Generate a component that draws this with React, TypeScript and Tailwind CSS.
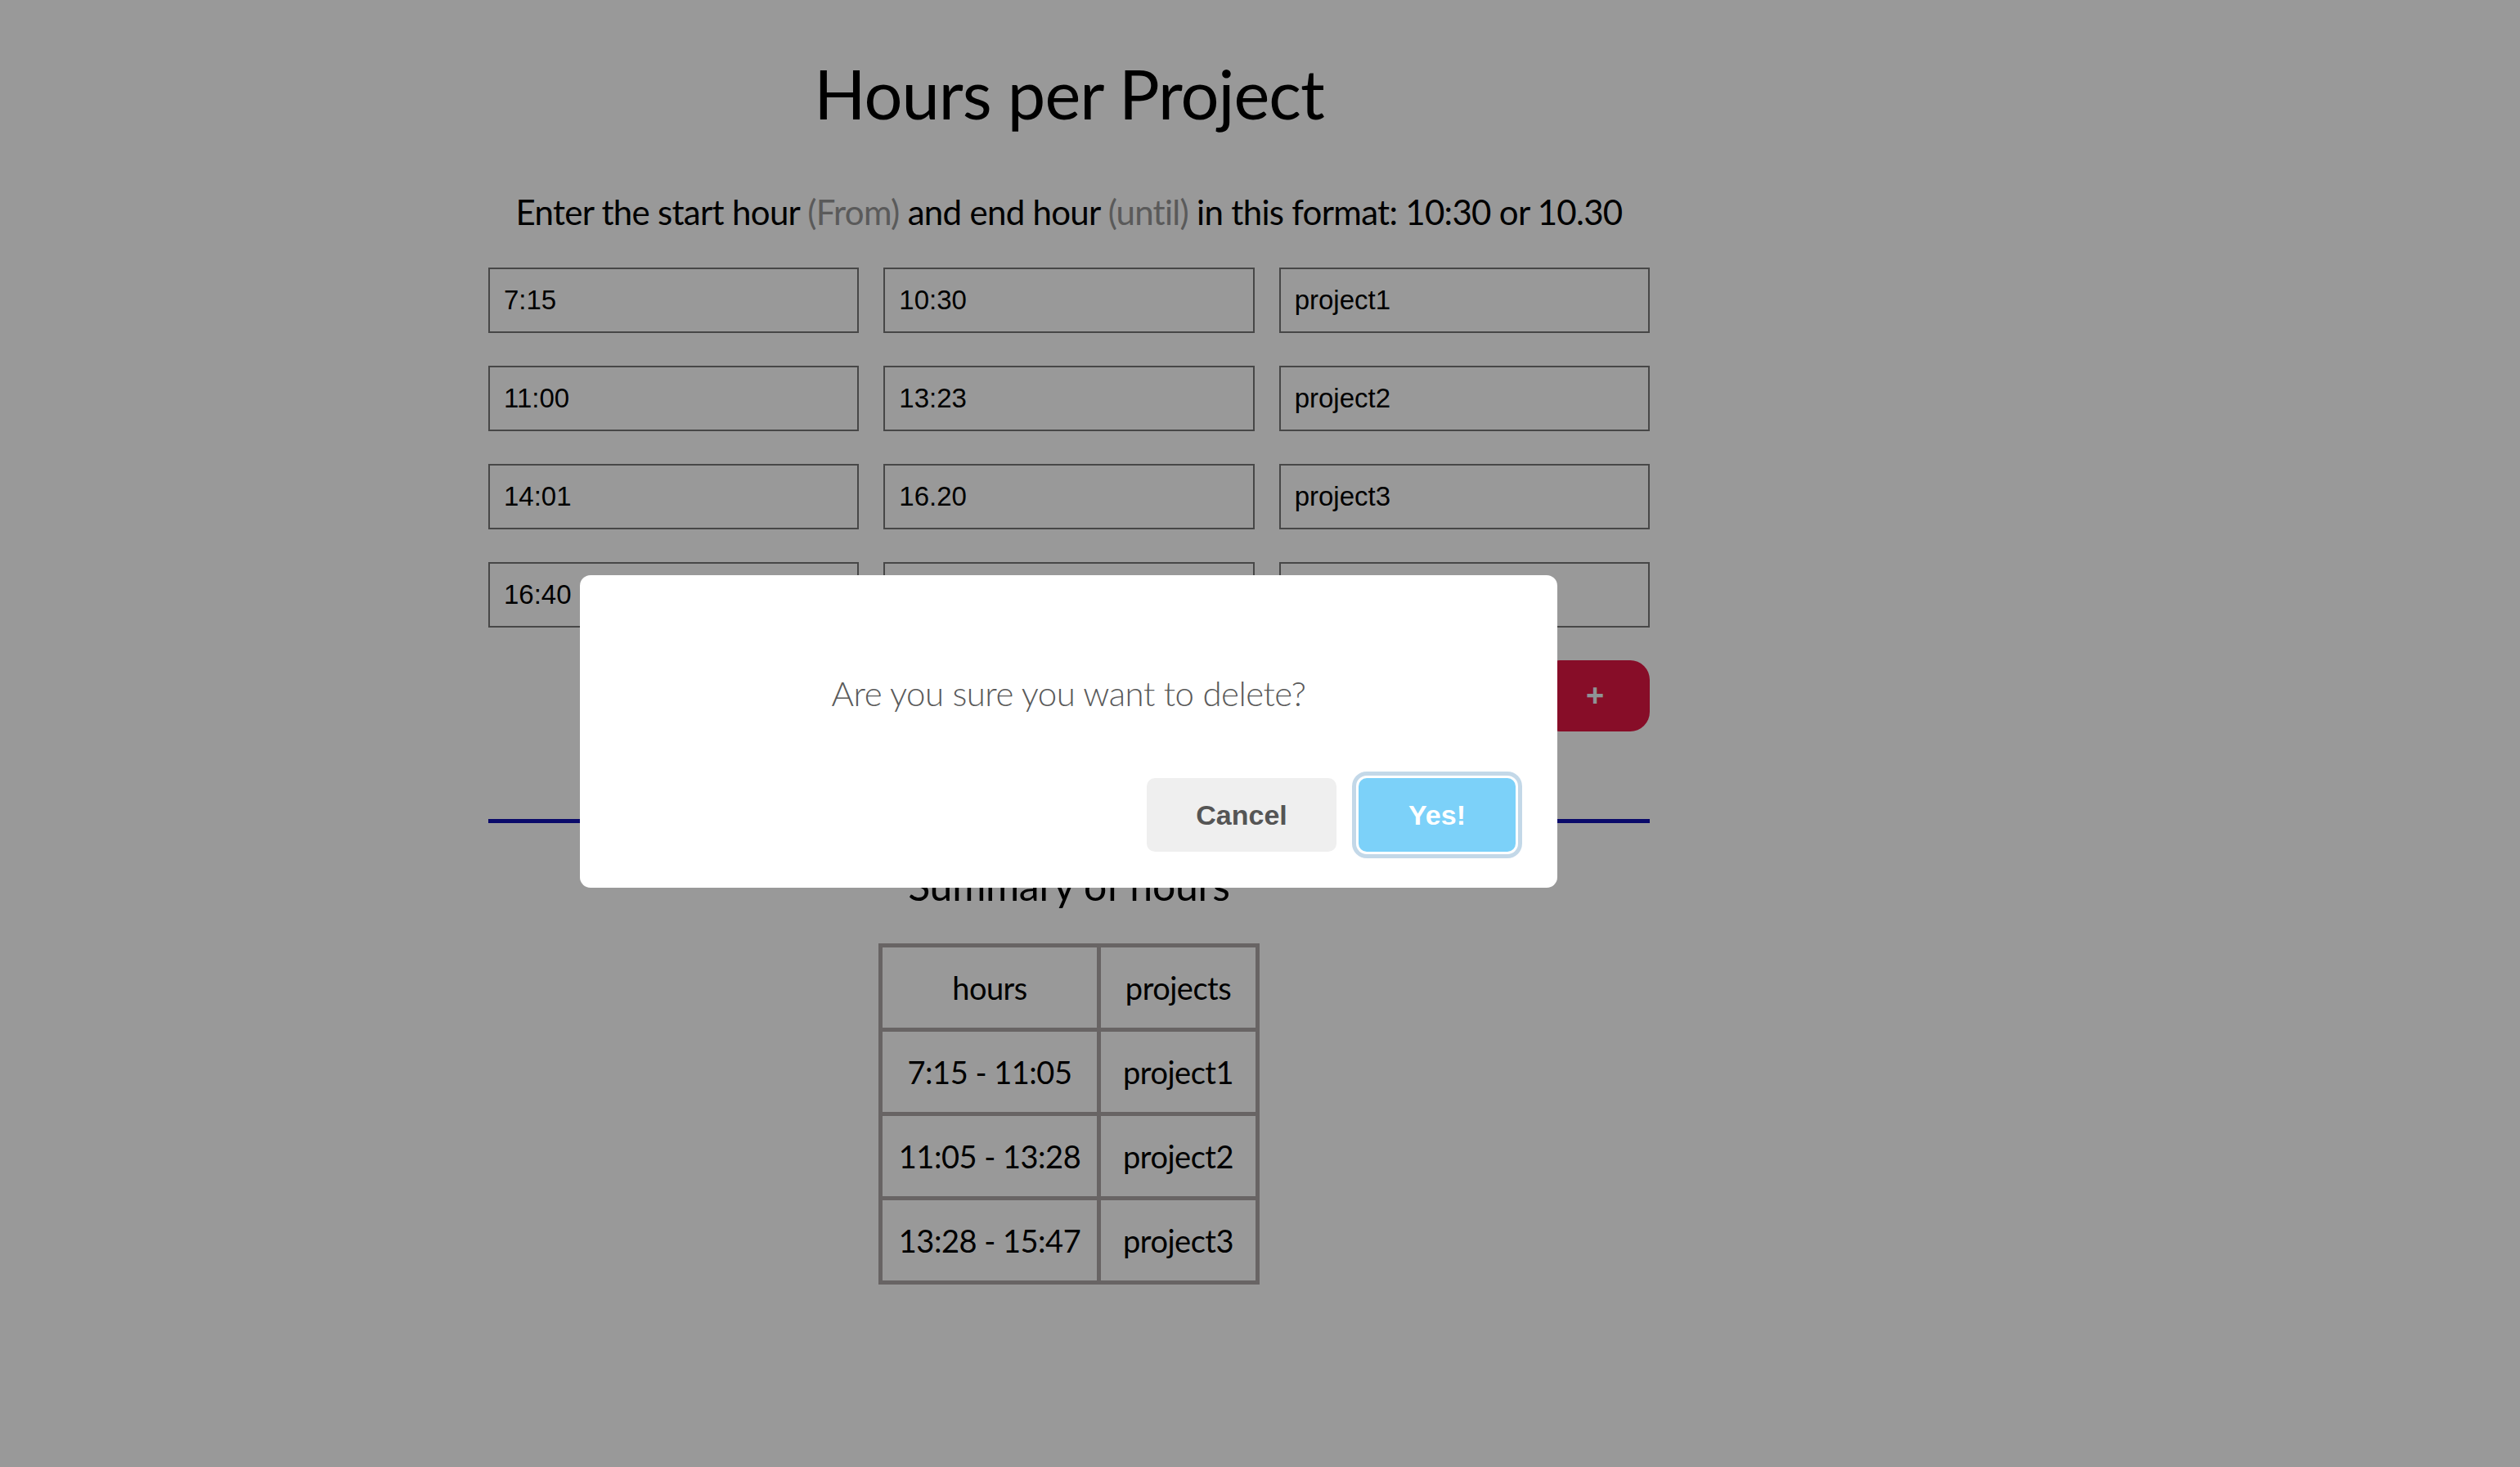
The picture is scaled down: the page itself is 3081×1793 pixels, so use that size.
import React from "react";

const entries = [
  ["7:15", "10:30", "project1"],
  ["11:00", "13:23", "project2"],
  ["14:01", "16.20", "project3"],
  ["16:40", "", ""],
];

const summary = [
  ["7:15 - 11:05", "project1"],
  ["11:05 - 13:28", "project2"],
  ["13:28 - 15:47", "project3"],
];

const ConfirmDialog = () => (
  <div className="fixed inset-0 bg-[rgba(0,0,0,0.4)]">
    <div className="absolute left-[709px] top-[703px] h-[382px] w-[1195px] rounded-[13px] bg-white">
      <p className="pt-[119px] text-center text-[42px] font-light leading-[50px] tracking-[-0.5px] text-[#5a5a5a]">
        Are you sure you want to delete?
      </p>
      <div className="mt-[79px] flex justify-end gap-[27px] pr-[51px] font-['Liberation_Sans',Arial,sans-serif] text-[34px] font-bold">
        <button className="h-[90px] w-[232px] rounded-[10px] bg-[#efefef] text-[#555555]">
          Cancel
        </button>
        <button className="h-[90px] w-[192px] rounded-[10px] bg-[#7cd1f9] text-white ring-[5px] ring-[#c3d8e8] ring-offset-[3px] ring-offset-white">
          Yes!
        </button>
      </div>
    </div>
  </div>
);

export default function App() {
  return (
    <div className="relative min-h-screen bg-white font-['Lato',sans-serif] text-black">
      <div className="ml-[597px] w-[1420px] pt-[63px]">
        <h1 className="text-center text-[83px] font-normal leading-[102px] tracking-[-1px]">
          Hours per Project
        </h1>
        <p className="mt-[68px] whitespace-nowrap text-center text-[42px] leading-[52px] tracking-[-0.7px]">
          Enter the start hour <span className="text-[#969696]">(From)</span> and
          end hour <span className="text-[#969696]">(until)</span> in this format:
          10:30 or 10.30
        </p>

        <div className="mt-[42px] grid grid-cols-3 gap-x-[30px] gap-y-[40px]">
          {entries.flat().map((v, i) => (
            <input
              key={i}
              readOnly
              defaultValue={v}
              className="h-[80px] w-full border-2 border-[#777777] bg-transparent px-[17px] font-['Liberation_Sans',Arial,sans-serif] text-[33px] text-black outline-none"
            />
          ))}
        </div>

        <div className="mt-[40px] flex justify-end">
          <button className="flex h-[87px] w-[134px] items-center justify-center rounded-[24px] bg-[#e11643] font-['Liberation_Sans',Arial,sans-serif] text-[38px] font-bold text-[#eef5fb]">
            +
          </button>
        </div>

        <hr className="mt-[107px] h-[5px] border-0 bg-[#1111b1]" />

        <h2 className="mt-[46px] text-center text-[50px] leading-[60px] tracking-[-0.3px]">
          Summary of hours
        </h2>

        <table className="mx-auto mt-[41px] w-[466px] table-fixed border-collapse border-[5px] border-[#ada7a7] text-center text-[38px] tracking-[-0.5px]">
          <thead>
            <tr className="h-[103px]">
              <th className="w-[267px] border-[5px] border-[#ada7a7] font-normal">hours</th>
              <th className="border-[5px] border-[#ada7a7] font-normal">projects</th>
            </tr>
          </thead>
          <tbody>
            {summary.map(([h, p]) => (
              <tr key={p} className="h-[103px]">
                <td className="border-[5px] border-[#ada7a7]">{h}</td>
                <td className="border-[5px] border-[#ada7a7]">{p}</td>
              </tr>
            ))}
          </tbody>
        </table>
      </div>

      <ConfirmDialog />
    </div>
  );
}
